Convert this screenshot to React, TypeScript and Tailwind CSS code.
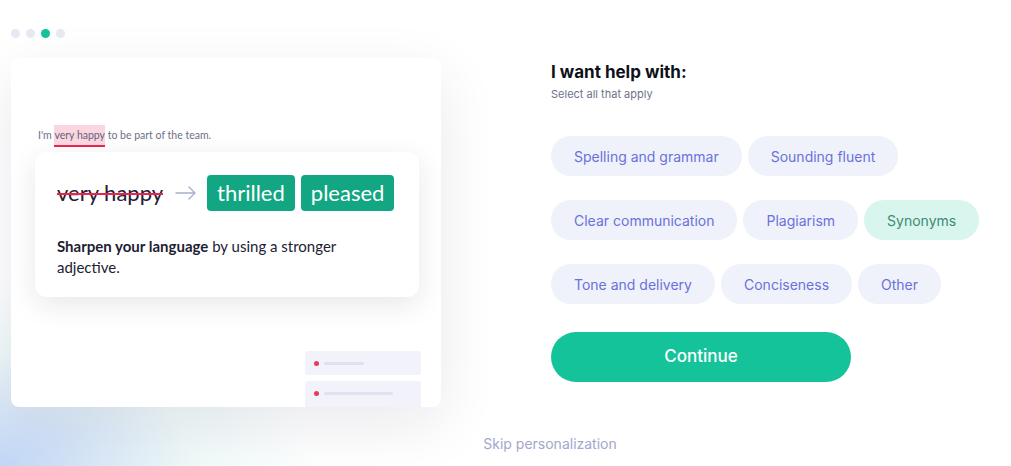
import React from "react";

const options = [
  ["Spelling and grammar", "Sounding fluent"],
  ["Clear communication", "Plagiarism", "Synonyms"],
  ["Tone and delivery", "Conciseness", "Other"],
];

const selected = ["Synonyms"];

const Dots = () => (
  <div className="flex gap-[6px]">
    {[0, 1, 2, 3].map((i) => (
      <span
        key={i}
        className={
          i === 2
            ? "w-[9px] h-[9px] rounded-full bg-[#15c39a]"
            : "w-[9px] h-[9px] rounded-full bg-[#e6e8f2]"
        }
      />
    ))}
  </div>
);

const Preview = () => (
  <div
    className="w-[430px] h-[349px] rounded-[8px] bg-white shadow-[0_18px_60px_rgba(20,25,60,0.09)] flex flex-col overflow-hidden"
    style={{ fontFamily: "Lato, 'Noto Sans', sans-serif" }}
  >
    <p className="mt-[67px] pl-[27px] text-[10.5px] leading-[20px] text-[#6d7189] flex items-center whitespace-pre">
      <span>I'm </span>
      <span className="relative inline-block h-[20px] bg-[#fcd6df] text-[#5f6381]">
        very happy
        <span className="absolute left-0 right-0 -bottom-[2px] h-[2px] bg-[#e8254e]" />
      </span>
      <span> to be part of the team.</span>
    </p>
    <div className="mt-[7px] ml-[24px] w-[384px] h-[145px] rounded-[12px] bg-white shadow-[0_8px_28px_rgba(20,25,60,0.10)] px-[22px] pt-[23px]">
      <div className="flex items-center whitespace-nowrap">
        <span className="text-[22px] leading-[36px] text-[#1d2133] line-through decoration-[#e8254e] decoration-[1.5px]">
          very happy
        </span>
        <svg width="22" height="14" viewBox="0 0 22 14" className="ml-[12px] mr-[10px] shrink-0" fill="none">
          <path d="M1 7h19M14 1l6 6-6 6" stroke="#a9aed0" strokeWidth="1.4" strokeLinecap="round" strokeLinejoin="round" />
        </svg>
        <span className="h-[36px] px-[10px] rounded-[4px] bg-[#13a683] text-white text-[22px] leading-[36px]">
          thrilled
        </span>
        <span className="ml-[6px] h-[36px] px-[10px] rounded-[4px] bg-[#13a683] text-white text-[22px] leading-[36px]">
          pleased
        </span>
      </div>
      <div className="mt-[25px] text-[15px] leading-[21px] text-[#1d2133]">
        <p>
          <span className="font-bold">Sharpen your language</span> by using a stronger
        </p>
        <p>adjective.</p>
      </div>
    </div>
    <div className="mt-auto pr-[20px] flex flex-col items-end gap-[6px] -mb-[2px]">
      <div className="w-[116px] h-[24px] rounded-[3px] bg-[#f2f2fb] flex items-center pl-[9px] gap-[5px]">
        <span className="w-[5px] h-[5px] rounded-full bg-[#ec3a55]" />
        <span className="w-[40px] h-[3px] rounded-full bg-[#dfe1f2]" />
      </div>
      <div className="w-[116px] h-[28px] rounded-[3px] bg-[#f2f2fb] flex items-start pt-[10px] pl-[9px] gap-[5px]">
        <span className="w-[5px] h-[5px] rounded-full bg-[#ec3a55]" />
        <span className="mt-[1px] w-[69px] h-[3px] rounded-full bg-[#dfe1f2]" />
      </div>
    </div>
  </div>
);

export default function App() {
  return (
    <main
      className="w-[1011px] h-[466px] overflow-hidden bg-white bg-[radial-gradient(ellipse_320px_190px_at_0%_100%,rgba(190,212,246,0.95),rgba(222,242,242,0.45)_60%,transparent_100%)]"
      style={{ fontFamily: "Inter, 'Noto Sans', sans-serif" }}
    >
      <div className="flex h-[434px]">
        <section className="w-[470px] pt-[29px] pl-[11px]">
          <Dots />
          <div className="mt-[20px]">
            <Preview />
          </div>
        </section>
        <section className="ml-[81px] pt-[61px]">
          <h1 className="text-[17px] leading-[22px] font-bold text-[#0e101a]">I want help with:</h1>
          <p className="mt-[3px] text-[11px] leading-[16px] text-[#6d7389]">Select all that apply</p>
          <div className="mt-[34px] flex flex-col gap-[24px]">
            {options.map((row, r) => (
              <div key={r} className="flex gap-[6px]">
                {row.map((label) => (
                  <button
                    key={label}
                    className={
                      selected.includes(label)
                        ? "h-[40px] px-[23px] rounded-full bg-[#d8f6ee] text-[#3d8a72] text-[14px]"
                        : "h-[40px] px-[23px] rounded-full bg-[#eff1fb] text-[#6a72da] text-[14px]"
                    }
                  >
                    {label}
                  </button>
                ))}
              </div>
            ))}
          </div>
          <button className="mt-[28px] w-[300px] h-[50px] rounded-full bg-[#15c39a] text-white text-[17px] font-medium">
            Continue
          </button>
        </section>
      </div>
      <div className="flex justify-center pl-[89px]">
        <span className="text-[14px] leading-[20px] text-[#a3a7cc]">Skip personalization</span>
      </div>
    </main>
  );
}
